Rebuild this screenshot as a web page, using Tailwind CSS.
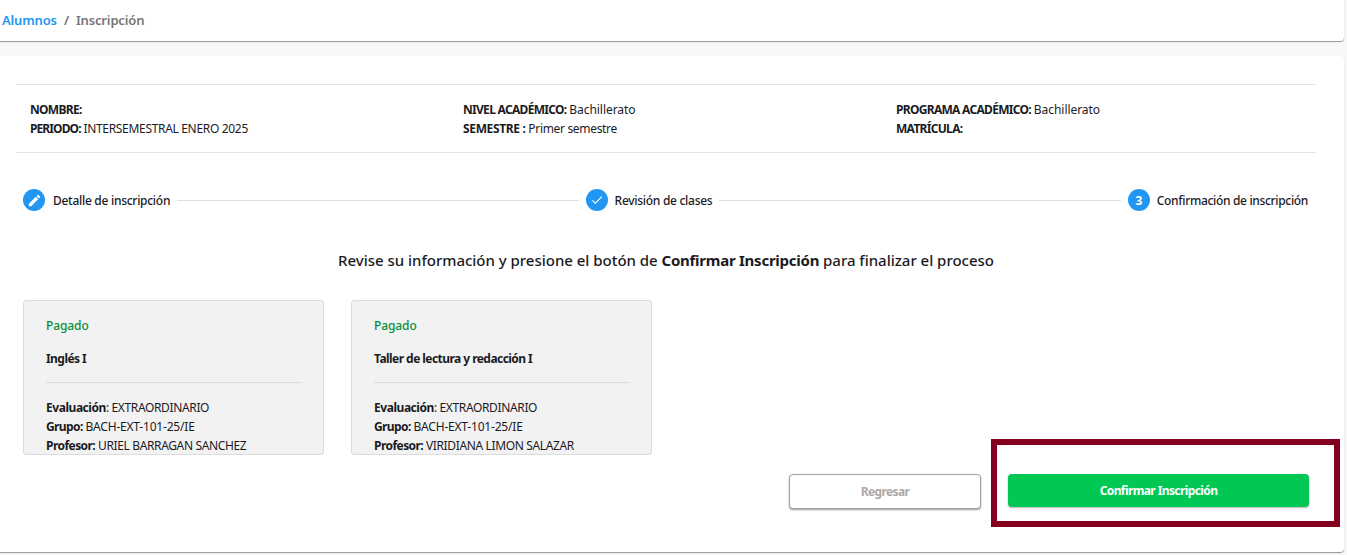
<!DOCTYPE html>
<html lang="es">
<head>
<meta charset="utf-8">
<script src="https://cdn.jsdelivr.net/npm/@tailwindcss/browser@4"></script>
<title>Inscripción</title>
</head>
<body class="bg-[#f8f8f8] font-['Noto_Sans',sans-serif] text-[#1b1b1f] text-[12px] leading-[19px] h-[555px] overflow-hidden relative">
<header class="w-[1344px] h-[41px] bg-white rounded-br-[4px] shadow-[0_1px_1px_rgba(0,0,0,0.4)] flex items-center pl-[2px] gap-[7px] text-[13px] font-semibold tracking-[-0.15px]">
  <a class="text-[#2196f3]">Alumnos</a><span class="text-[#757575]">/</span><span class="text-[#757575]">Inscripción</span>
</header>
<main class="mt-[15px] w-[1344px] h-[496px] bg-white rounded-r-[4px] shadow-[0_1px_1px_rgba(0,0,0,0.4)] pt-[28px] flex flex-col">
  <section class="mx-[16px] w-[1300px] h-[69px] border-y border-[#e2e2e2] grid grid-cols-[447px_433px_1fr] pl-[14px] pt-[15px] tracking-[-0.32px] [&_b]:tracking-[-0.7px]">
    <div class="-mr-[14px]"><div><b>NOMBRE:</b></div><div><b class="tracking-[-0.9px]!">PERIODO:</b> INTERSEMESTRAL ENERO 2025</div></div>
    <div class="-ml-[14px]"><div><b>NIVEL ACADÉMICO:</b> <span class="tracking-[-0.05px]">Bachillerato</span></div><div><b class="tracking-[-0.35px]!">SEMESTRE :</b> Primer semestre</div></div>
    <div class="-ml-[14px]"><div><b>PROGRAMA ACADÉMICO:</b> <span class="tracking-[-0.05px]">Bachillerato</span></div><div><b>MATRÍCULA:</b></div></div>
  </section>
  <section class="mt-[36px] ml-[23px] w-[1285px] h-[22px] flex items-center gap-[7px]">
    <span class="w-[22px] h-[22px] rounded-full bg-[#2196f3] flex items-center justify-center shrink-0"><svg viewBox="0 0 24 24" class="w-[15px] h-[15px]" fill="#fff"><path d="M3 17.25V21h3.75L17.81 9.94l-3.75-3.75L3 17.25zM20.71 7.04a1 1 0 0 0 0-1.41l-2.34-2.34a1 1 0 0 0-1.41 0l-1.83 1.83 3.75 3.75 1.83-1.83z"/></svg></span>
    <span class="ml-px font-medium whitespace-nowrap tracking-[-0.28px]">Detalle de inscripción</span>
    <span class="flex-1 h-px bg-[#e0e0e0]"></span>
    <span class="w-[22px] h-[22px] rounded-full bg-[#2196f3] flex items-center justify-center shrink-0"><svg viewBox="0 0 24 24" class="w-[14px] h-[14px]" fill="#fff"><path d="M9 16.17 4.83 12l-1.42 1.41L9 19 21 7l-1.41-1.41z"/></svg></span>
    <span class="font-medium whitespace-nowrap tracking-[-0.28px]">Revisión de clases</span>
    <span class="flex-1 h-px bg-[#e0e0e0]"></span>
    <span class="w-[22px] h-[22px] rounded-full bg-[#2196f3] text-white font-bold flex items-center justify-center shrink-0">3</span>
    <span class="font-medium whitespace-nowrap tracking-[-0.33px]">Confirmación de inscripción</span>
  </section>
  <h1 class="mt-[38px] ml-[16px] w-[1300px] text-center text-[15px] leading-[22px] font-medium tracking-[-0.02px] [&_b]:tracking-[-0.25px]">Revise su información y presione el botón de <b>Confirmar Inscripción</b> para finalizar el proceso</h1>
  <section class="mt-[29px] ml-[23px] flex gap-[27px]">
    <article class="w-[301px] h-[155px] overflow-hidden bg-[#f2f2f2] border border-[#dcdcdc] rounded-[3px] px-[22px] pt-[15px] tracking-[-0.36px] [&_b]:tracking-[-0.45px]">
      <div class="text-[#0a8f35] font-medium tracking-[-0.1px]">Pagado</div>
      <div class="mt-[14px]"><b class="tracking-[-0.55px]!">Inglés I</b></div>
      <div class="mt-[14px] mb-[15px] h-px bg-[#d9d9d9]"></div>
      <div><b>Evaluación</b>: EXTRAORDINARIO</div>
      <div><b class="tracking-[-0.6px]!">Grupo:</b> <span class="tracking-[-0.2px]">BACH-EXT-101-25/IE</span></div>
      <div><b class="tracking-[-0.55px]!">Profesor:</b> URIEL BARRAGAN SANCHEZ</div>
    </article>
    <article class="w-[301px] h-[155px] overflow-hidden bg-[#f2f2f2] border border-[#dcdcdc] rounded-[3px] px-[22px] pt-[15px] tracking-[-0.36px] [&_b]:tracking-[-0.45px]">
      <div class="text-[#0a8f35] font-medium tracking-[-0.1px]">Pagado</div>
      <div class="mt-[14px]"><b class="tracking-[-0.55px]!">Taller de lectura y redacción I</b></div>
      <div class="mt-[14px] mb-[15px] h-px bg-[#d9d9d9]"></div>
      <div><b>Evaluación</b>: EXTRAORDINARIO</div>
      <div><b class="tracking-[-0.6px]!">Grupo:</b> <span class="tracking-[-0.2px]">BACH-EXT-101-25/IE</span></div>
      <div><b class="tracking-[-0.55px]!">Profesor:</b> VIRIDIANA LIMON SALAZAR</div>
    </article>
  </section>
  <section class="mt-[19px] ml-[789px] flex items-start gap-[27px]">
    <button class="w-[192px] h-[35px] bg-white border border-[#a89f9f] rounded-[4px] shadow-[0_1px_2px_rgba(0,0,0,0.4)] text-[#b0a7a7] font-bold tracking-[-0.6px]">Regresar</button>
    <button class="w-[301px] h-[33px] bg-[#00c853] rounded-[4px] shadow-[0_1px_2px_rgba(0,0,0,0.3)] text-white font-bold tracking-[-0.6px]">Confirmar Inscripción</button>
  </section>
</main>
<div class="absolute left-[991px] top-[439px] w-[349px] h-[88px] border-[6px] border-[#85001f] pointer-events-none"></div>
</body>
</html>
